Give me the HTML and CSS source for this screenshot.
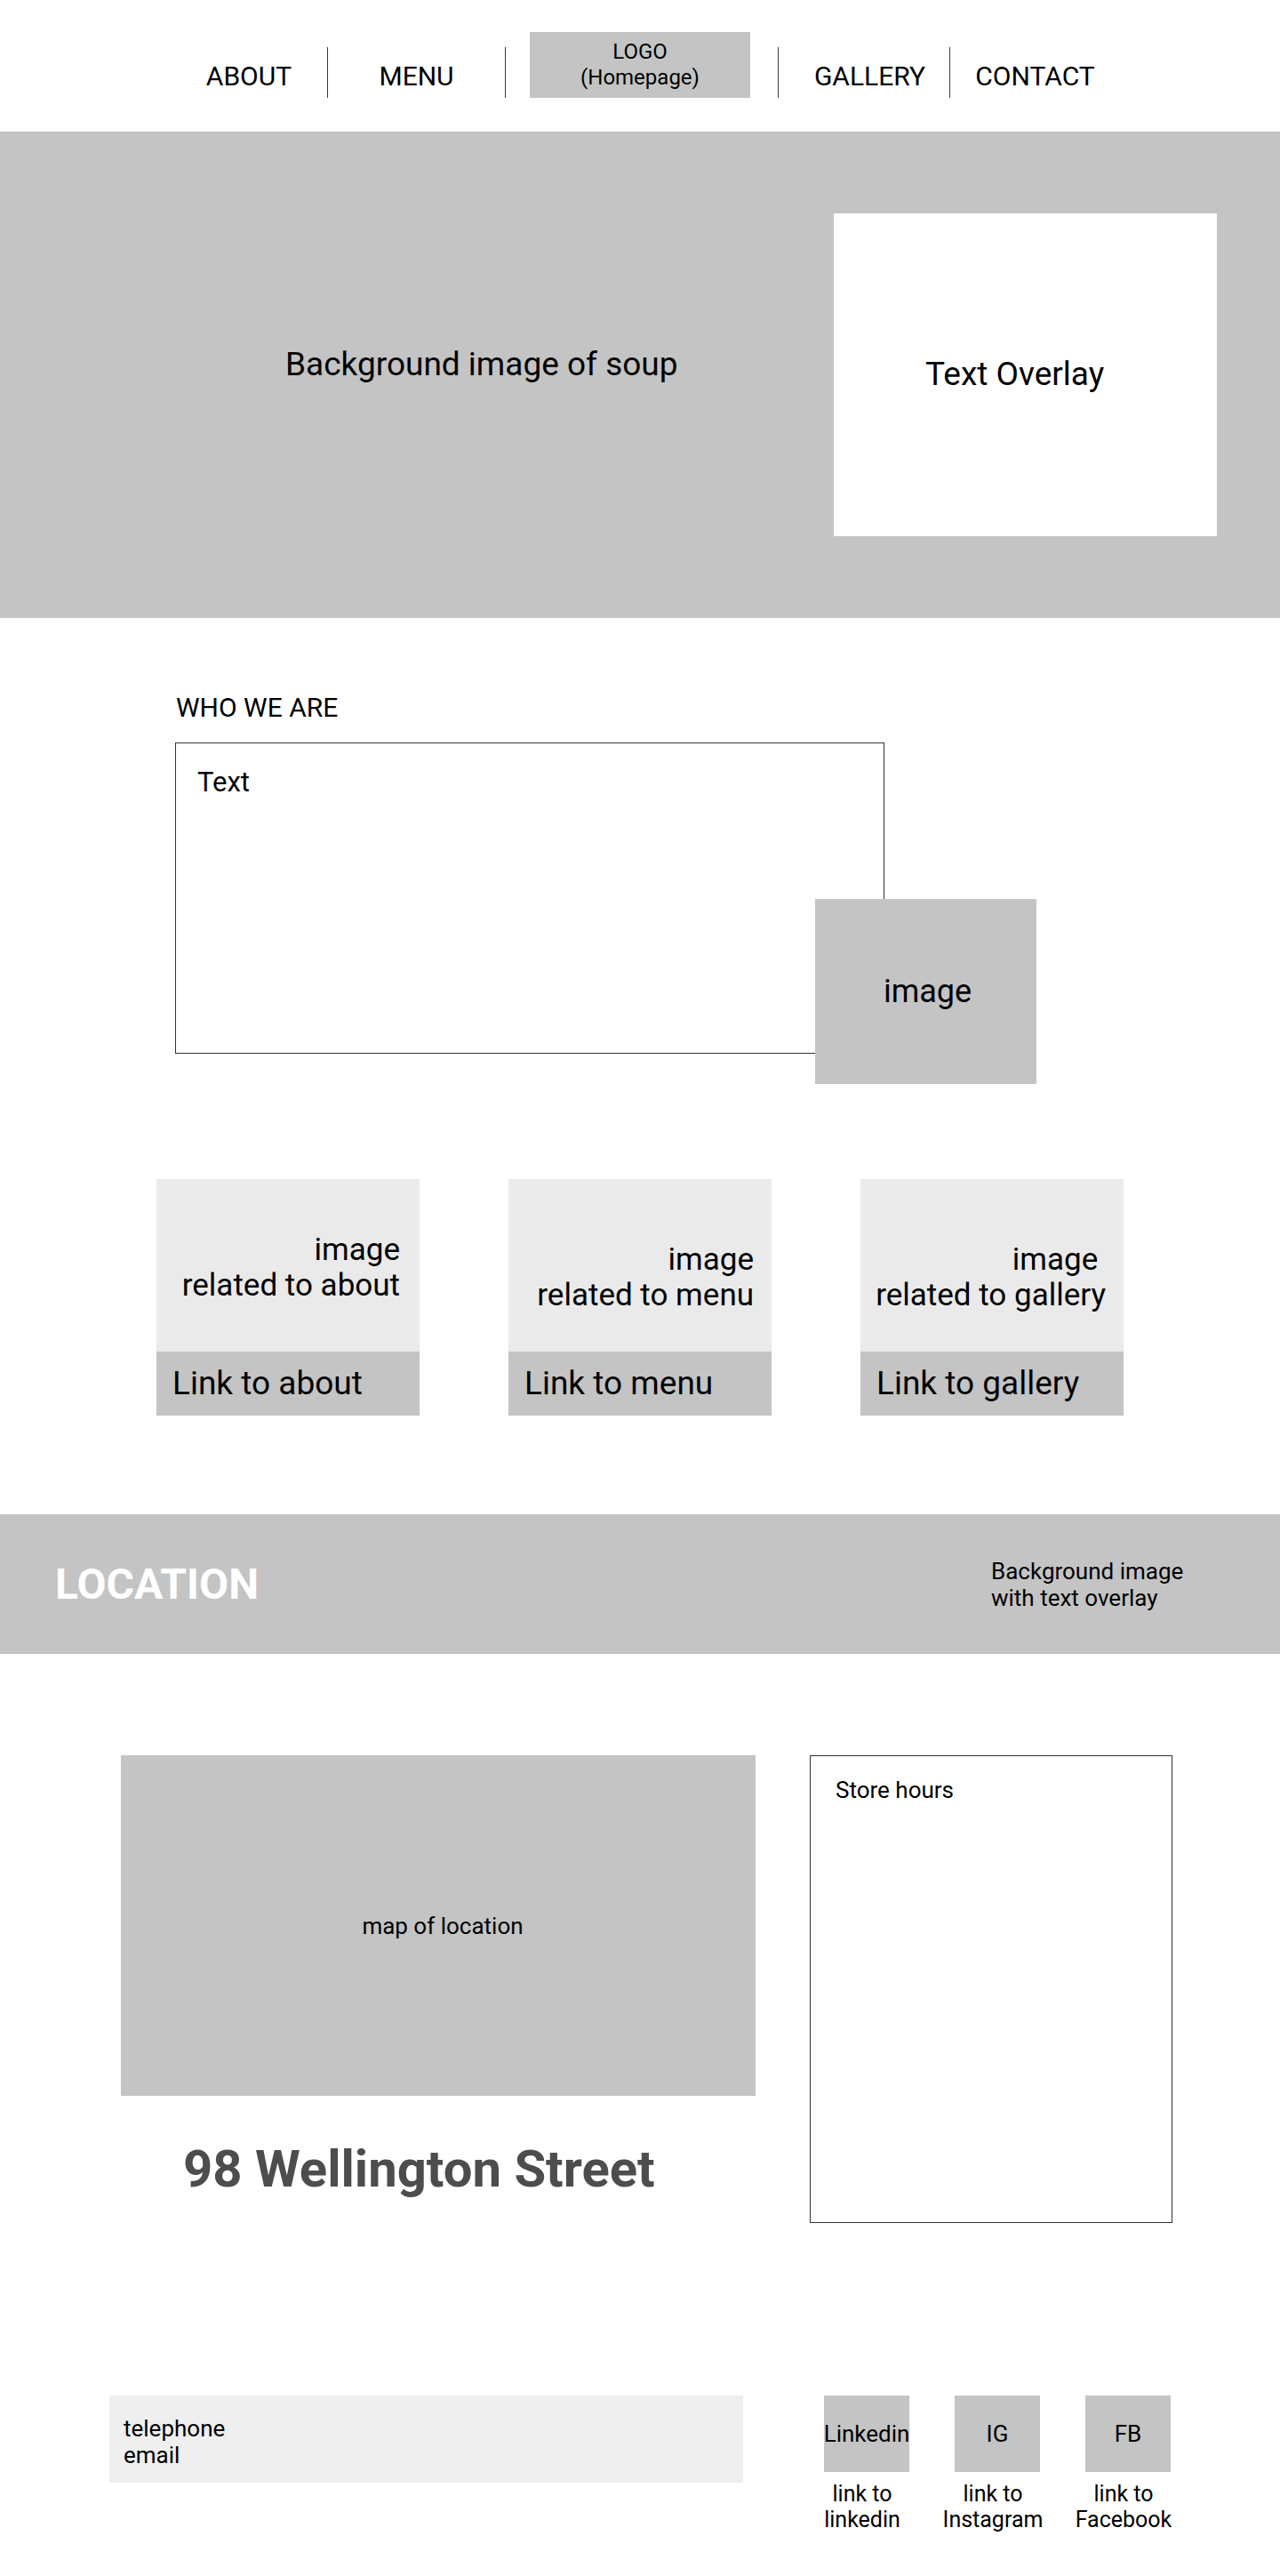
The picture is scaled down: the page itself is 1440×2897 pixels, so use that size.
FILE: index.html
```html
<!DOCTYPE html>
<html lang="en">
<head>
<meta charset="utf-8">
<title>Soup Restaurant Wireframe</title>
<link rel="stylesheet" href="styles.css">
</head>
<body>
<header class="site-header">
  <nav class="nav">
    <a class="nav-item nav-about">ABOUT</a>
    <span class="nav-sep"></span>
    <a class="nav-item nav-menu">MENU</a>
    <span class="nav-sep"></span>
    <div class="nav-logo-cell"><a class="nav-logo">LOGO<br>(Homepage)</a></div>
    <span class="nav-sep"></span>
    <a class="nav-item nav-gallery">GALLERY</a>
    <span class="nav-sep"></span>
    <a class="nav-item nav-contact">CONTACT</a>
  </nav>
</header>

<section class="hero">
  <h1 class="hero-title">Background image of soup</h1>
  <div class="hero-overlay">Text Overlay</div>
</section>

<section class="who">
  <h2 class="who-title">WHO WE ARE</h2>
  <div class="who-wrap">
    <div class="who-box"><p class="who-text">Text</p></div>
    <div class="who-image">image</div>
  </div>
</section>

<section class="cards">
  <div class="card card-about">
    <div class="card-image">image<br>related to about</div>
    <a class="card-link">Link to about</a>
  </div>
  <div class="card">
    <div class="card-image">image<br>related to menu</div>
    <a class="card-link">Link to menu</a>
  </div>
  <div class="card">
    <div class="card-image">image&nbsp;<br>related to gallery</div>
    <a class="card-link">Link to gallery</a>
  </div>
</section>

<section class="location-band">
  <h2 class="location-title">LOCATION</h2>
  <p class="location-note">Background image<br>with text overlay</p>
</section>

<section class="location">
  <div class="location-left">
    <div class="map">map of location</div>
    <p class="address">98 Wellington Street</p>
  </div>
  <div class="hours">
    <p class="hours-title">Store hours</p>
  </div>
</section>

<footer class="contact">
  <div class="contact-box">telephone<br>email</div>
  <div class="socials">
    <div class="social">
      <div class="social-box">Linkedin</div>
      <div class="social-label">link to<br>linkedin</div>
    </div>
    <div class="social">
      <div class="social-box">IG</div>
      <div class="social-label">link to<br>Instagram</div>
    </div>
    <div class="social">
      <div class="social-box">FB</div>
      <div class="social-label">link to<br>Facebook</div>
    </div>
  </div>
</footer>
</body>
</html>
```

FILE: styles.css
```css
* { box-sizing: border-box; }

html, body {
  margin: 0;
  padding: 0;
  background: #ffffff;
}

body {
  width: 1440px;
  font-family: Roboto, "Liberation Sans", sans-serif;
  color: #000;
}

h1, h2, p { margin: 0; font-weight: 400; }
a { color: inherit; text-decoration: none; }

/* ---------- header ---------- */
.site-header {
  height: 148px;
  padding-top: 36px;
}

.nav {
  display: flex;
  align-items: flex-end;
  height: 74px;
  padding-left: 192px;
}

.nav-item {
  font-size: 30px;
  line-height: 35px;
  text-align: center;
  margin-bottom: 7px;
  white-space: nowrap;
}

.nav-about { width: 176px; }
.nav-menu { width: 199px; }
.nav-gallery { width: 192px; padding-left: 13px; }
.nav-contact { width: 191px; }

.nav-sep {
  width: 1px;
  height: 57px;
  background: #3a3a3a;
}

.nav-logo-cell {
  width: 306px;
  height: 74px;
  padding-left: 27px;
}

.nav-logo {
  display: block;
  width: 248px;
  height: 74px;
  padding-top: 8px;
  background: #c4c4c4;
  font-size: 24px;
  line-height: 29px;
  text-align: center;
}

/* ---------- hero ---------- */
.hero {
  display: flex;
  justify-content: space-between;
  align-items: flex-start;
  height: 547px;
  padding: 92px 71px 92px 321px;
  background: #c4c4c4;
}

.hero-title {
  margin-top: 148px;
  font-size: 37px;
  line-height: 43px;
}

.hero-overlay {
  width: 431px;
  height: 363px;
  padding: 159px 0 0 103px;
  background: #ffffff;
  font-size: 37px;
  line-height: 43px;
}

/* ---------- who we are ---------- */
.who {
  padding: 83px 0 0 197px;
}

.who-title {
  font-size: 30px;
  line-height: 35px;
  padding-left: 1px;
}

.who-wrap {
  position: relative;
  width: 798px;
  margin-top: 22px;
}

.who-box {
  height: 350px;
  border: 1px solid #333;
  padding: 26px 0 0 24px;
}

.who-text {
  font-size: 31px;
  line-height: 35px;
}

.who-image {
  position: absolute;
  left: 720px;
  top: 176px;
  width: 249px;
  height: 208px;
  display: flex;
  align-items: center;
  justify-content: center;
  padding-left: 4px;
  background: #c4c4c4;
  font-size: 36px;
  line-height: 42px;
}

/* ---------- cards ---------- */
.cards {
  display: flex;
  justify-content: center;
  gap: 100px;
  padding-top: 141px;
}

.card {
  width: 296px;
}

.card-image {
  height: 194px;
  padding: 71px 20px 0 0;
  background: #eaeaea;
  font-size: 35px;
  line-height: 40px;
  text-align: right;
  white-space: nowrap;
}

.card-about .card-image {
  padding-top: 60px;
  padding-right: 22px;
}

.card-link {
  display: block;
  height: 72px;
  padding-left: 18px;
  background: #c4c4c4;
  font-size: 37px;
  line-height: 72px;
  white-space: nowrap;
}

/* ---------- location band ---------- */
.location-band {
  display: flex;
  justify-content: space-between;
  align-items: center;
  height: 157px;
  margin-top: 111px;
  padding: 0 60px 0 62px;
  background: #c4c4c4;
}

.location-title {
  color: #ffffff;
  font-weight: 700;
  font-size: 48px;
  line-height: 56px;
}

.location-note {
  width: 265px;
  font-size: 26px;
  line-height: 30px;
}

/* ---------- location ---------- */
.location {
  display: flex;
  align-items: flex-start;
  gap: 61px;
  padding: 114px 0 0 136px;
}

.location-left {
  width: 714px;
}

.map {
  height: 383px;
  display: flex;
  align-items: center;
  justify-content: center;
  background: #c4c4c4;
  font-size: 26px;
  line-height: 30px;
  padding-left: 10px;
}

.address {
  margin-top: 48px;
  padding-left: 70px;
  color: #4d4d4d;
  font-weight: 700;
  font-size: 58px;
  line-height: 68px;
  white-space: nowrap;
}

.hours {
  width: 408px;
  height: 526px;
  border: 1px solid #333;
  padding: 23px 0 0 28px;
}

.hours-title {
  font-size: 26px;
  line-height: 30px;
}

/* ---------- contact ---------- */
.contact {
  display: flex;
  align-items: flex-start;
  gap: 91px;
  padding: 194px 0 49px 123px;
}

.contact-box {
  width: 713px;
  height: 98px;
  padding: 22px 0 0 16px;
  background: #efefef;
  font-size: 26px;
  line-height: 30px;
}

.socials {
  display: flex;
  gap: 51px;
}

.social {
  width: 96px;
}

.social-box {
  height: 86px;
  display: flex;
  align-items: center;
  justify-content: center;
  background: #c4c4c4;
  font-size: 26px;
  line-height: 30px;
  white-space: nowrap;
}

.social-label {
  margin: 10px -20px 0;
  padding-right: 10px;
  text-align: center;
  font-size: 25px;
  line-height: 29px;
  white-space: nowrap;
}
```
